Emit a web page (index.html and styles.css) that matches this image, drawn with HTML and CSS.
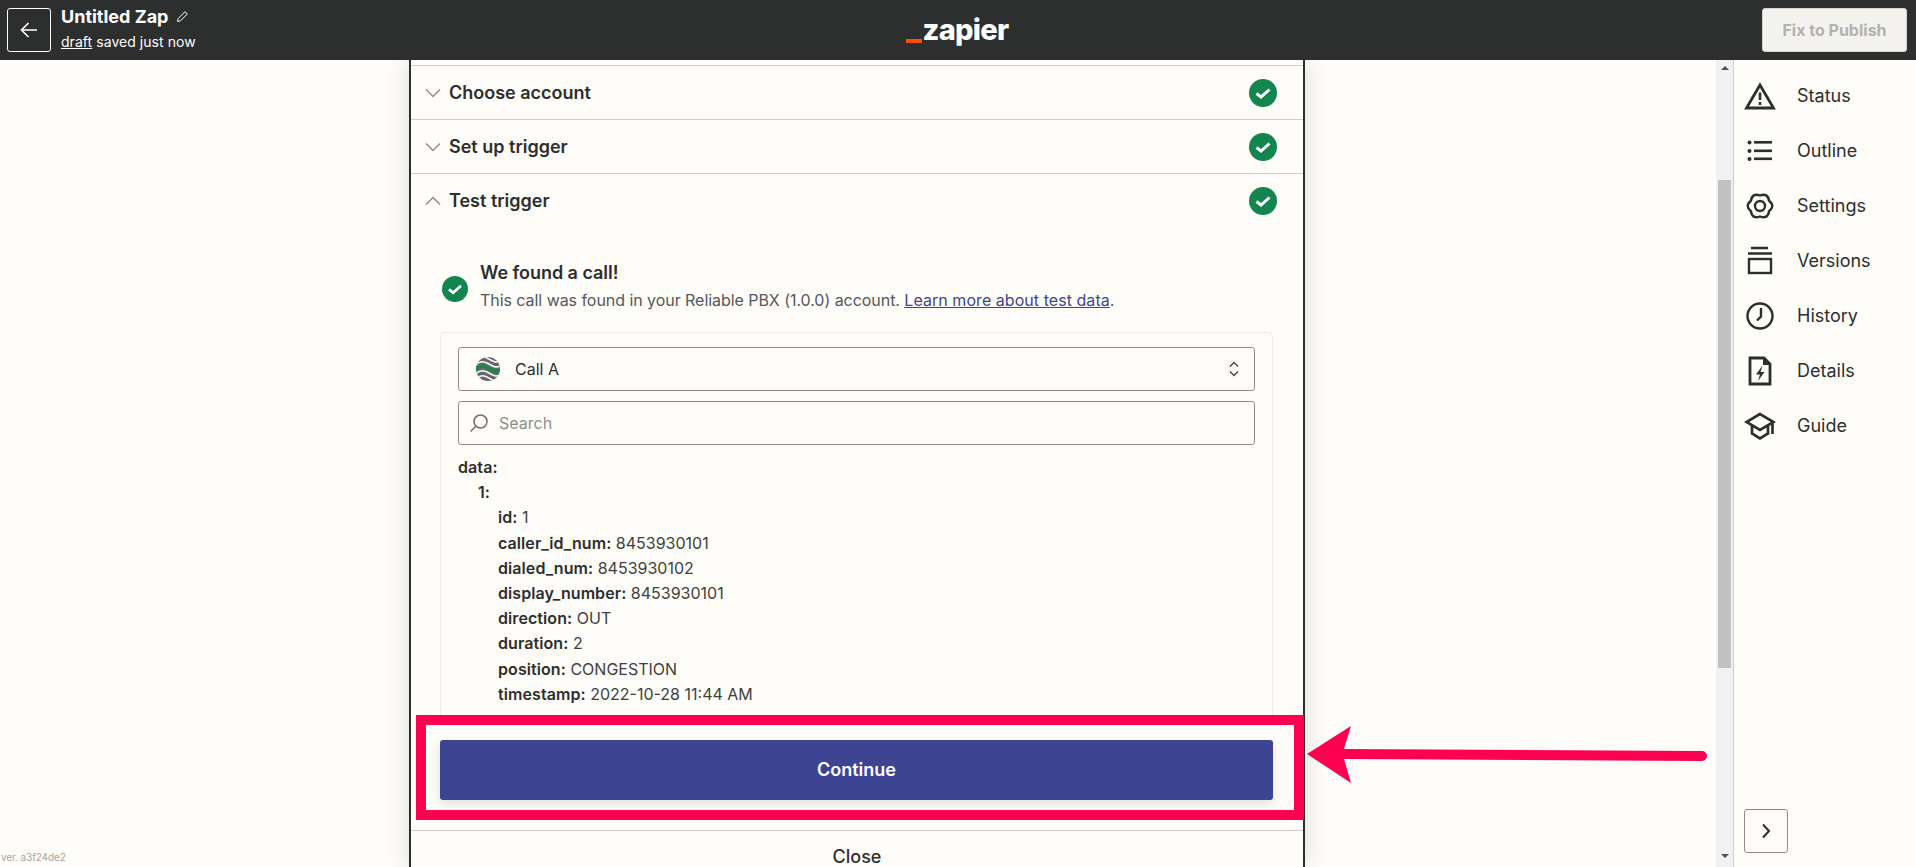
FILE: index.html
```html
<!DOCTYPE html>
<html lang="en">
<head>
<meta charset="UTF-8">
<title>Untitled Zap</title>
<link rel="stylesheet" href="styles.css">
</head>
<body>
	<header class="topbar">
		<div class="topbar-left">
			<button class="back">
				<svg width="20" height="20" viewBox="0 0 20 20" fill="none" stroke="#fff" stroke-width="1.6"><path d="M18 10H2.500M9.500 3l-7 7 7 7"/></svg>
			</button>
			<div class="zap">
				<p class="zap-name">Untitled Zap
					<svg width="13" height="13" viewBox="0 0 13 13" fill="none" stroke="#fff" stroke-width="1"><path d="M1.500 11.500l.7-3L9 1.700l2.300 2.300-6.800 6.800z"/></svg>
				</p>
				<p class="zap-status"><a href="#">draft</a> saved just now</p>
			</div>
		</div>
		<div class="logo"><span class="logo-bar"></span><span class="logo-text">zapier</span></div>
		<div class="topbar-right">
			<button class="publish">Fix to Publish</button>
		</div>
	</header>

	<div class="content">
		<main class="canvas">
			<section class="panel">
				<div class="panel-body">
					<div class="step">
						<svg class="chev" width="16" height="10" viewBox="0 0 16 10" fill="none" stroke="#8f8e8b" stroke-width="1.500"><path d="M1 1.500l7 7 7-7"/></svg>
						<span class="step-name">Choose account</span>
						<svg class="ok" width="28" height="28" viewBox="0 0 28 28"><circle cx="14" cy="14" r="14" fill="#13854e"/><path d="M7.500 14.500l4.500 3.500 8.500-7.500" fill="none" stroke="#fff" stroke-width="3"/></svg>
					</div>
					<div class="step">
						<svg class="chev" width="16" height="10" viewBox="0 0 16 10" fill="none" stroke="#8f8e8b" stroke-width="1.500"><path d="M1 1.500l7 7 7-7"/></svg>
						<span class="step-name">Set up trigger</span>
						<svg class="ok" width="28" height="28" viewBox="0 0 28 28"><circle cx="14" cy="14" r="14" fill="#13854e"/><path d="M7.500 14.500l4.500 3.500 8.500-7.500" fill="none" stroke="#fff" stroke-width="3"/></svg>
					</div>
					<div class="step">
						<svg class="chev" width="16" height="10" viewBox="0 0 16 10" fill="none" stroke="#8f8e8b" stroke-width="1.500"><path d="M1 8.500l7-7 7 7"/></svg>
						<span class="step-name">Test trigger</span>
						<svg class="ok" width="28" height="28" viewBox="0 0 28 28"><circle cx="14" cy="14" r="14" fill="#13854e"/><path d="M7.500 14.500l4.500 3.500 8.500-7.500" fill="none" stroke="#fff" stroke-width="3"/></svg>
					</div>

					<div class="found">
						<svg class="found-icon" width="26" height="26" viewBox="0 0 28 28"><circle cx="14" cy="14" r="14" fill="#13854e"/><path d="M7.500 14.500l4.500 3.500 8.500-7.500" fill="none" stroke="#fff" stroke-width="3"/></svg>
						<div>
							<p class="found-title">We found a call!</p>
							<p class="found-text">This call was found in your Reliable PBX (1.0.0) account. <a href="#">Learn more about test data</a>.</p>
						</div>
					</div>

					<div class="card">
						<div class="field select">
							<svg class="app-logo" width="26" height="26" viewBox="0 0 26 26">
								<defs><clipPath id="globe"><circle cx="13" cy="13" r="12"/></clipPath></defs>
								<g clip-path="url(#globe)" fill="none">
									<rect width="26" height="26" fill="#66686a"/>
									<path d="M-1 6C4-1 9 0 13 2.500S21 8 27 4M-1 11C4 4 9 5 13 7.500S21 13 27 9M-1 20C4 13 9 14 13 16.500S21 22 27 18M-1 25C4 18 9 19 13 21.500S21 27 27 23" stroke="#fff" stroke-width="1.500"/>
									<path d="M-1 15.500C4 8.500 9 9.500 13 12S21 17.500 27 13.500" stroke="#148a45" stroke-width="3.200"/>
								</g>
							</svg>
							<span class="select-value">Call A</span>
							<svg class="updown" width="12" height="20" viewBox="0 0 12 20" fill="none" stroke="#403f3e" stroke-width="1.300"><path d="M2 7.500l4-4 4 4M2 12.500l4 4 4-4"/></svg>
						</div>
						<div class="field search">
							<svg width="20" height="20" viewBox="0 0 20 20" fill="none" stroke="#6f6e6b" stroke-width="1.500"><circle cx="11.500" cy="8.500" r="6.500"/><path d="M6.500 13.500L1.500 18.500"/></svg>
							<span class="search-hint">Search</span>
						</div>
						<div class="data">
							<p><b>data:</b></p>
							<p class="lvl1"><b>1:</b></p>
							<p class="lvl2"><b>id:</b> 1</p>
							<p class="lvl2"><b>caller_id_num:</b> 8453930101</p>
							<p class="lvl2"><b>dialed_num:</b> 8453930102</p>
							<p class="lvl2"><b>display_number:</b> 8453930101</p>
							<p class="lvl2"><b>direction:</b> OUT</p>
							<p class="lvl2"><b>duration:</b> 2</p>
							<p class="lvl2"><b>position:</b> CONGESTION</p>
							<p class="lvl2"><b>timestamp:</b> 2022-10-28 11:44 AM</p>
						</div>
					</div>
				</div>
				<div class="panel-action">
					<button class="continue">Continue</button>
				</div>
				<div class="panel-close">Close</div>
			</section>
			<span class="version">ver. a3f24de2</span>
		</main>

		<div class="scrollbar">
			<span class="arrow-up"></span>
			<span class="thumb"></span>
			<span class="arrow-down"></span>
		</div>

		<aside class="sidebar">
			<ul class="menu">
				<li>
					<svg width="32" height="32" viewBox="0 0 32 32" fill="none" stroke="#2d2e2e" stroke-width="2.800"><path d="M16 5L2.500 28h27z"/><path d="M16 12.500v7.500M16 22v3" stroke-width="2.600"/></svg>
					Status
				</li>
				<li>
					<svg width="32" height="32" viewBox="0 0 32 32" fill="#2d2e2e"><circle cx="5.500" cy="7.500" r="2"/><circle cx="5.500" cy="16" r="2"/><circle cx="5.500" cy="24" r="2"/><rect x="10" y="6" width="18" height="2.600"/><rect x="10" y="14.500" width="18" height="2.600"/><rect x="10" y="22.500" width="18" height="2.600"/></svg>
					Outline
				</li>
				<li>
					<svg width="32" height="32" viewBox="0 0 32 32" fill="none" stroke="#2d2e2e" stroke-width="2.400" stroke-linejoin="round"><path d="M16 5.500Q23.750 2.600 25.100 10.750Q31.500 16 25.100 21.250Q23.750 29.400 16 26.500Q8.250 29.400 6.900 21.250Q.5 16 6.900 10.750Q8.250 2.600 16 5.500z"/><circle cx="16" cy="16" r="5"/></svg>
					Settings
				</li>
				<li>
					<svg width="32" height="32" viewBox="0 0 32 32" fill="none" stroke="#2d2e2e" stroke-width="2.400"><path d="M7 3h17M4 8.500h24"/><rect x="5" y="14" width="22" height="14"/></svg>
					Versions
				</li>
				<li>
					<svg width="32" height="32" viewBox="0 0 32 32" fill="none" stroke="#2d2e2e" stroke-width="2.400"><circle cx="16" cy="16" r="12.500"/><path d="M17 8v8.500l-4 4"/></svg>
					History
				</li>
				<li>
					<svg width="32" height="32" viewBox="0 0 32 32" fill="none" stroke="#2d2e2e" stroke-width="2.800"><path d="M6 3h14l6 6v20H6z"/><path d="M19 2v8h8z" fill="#2d2e2e" stroke="none"/><path d="M18.500 10.500l-6.500 9h4l-2 6.500 6.500-9h-4z" fill="#2d2e2e" stroke="none"/></svg>
					Details
				</li>
				<li>
					<svg width="32" height="32" viewBox="0 0 32 32" fill="none" stroke="#2d2e2e" stroke-width="2.700"><path d="M16 4L2.500 12 16 20l13.500-8zM8 16v7.500l8 5 8-5V16M28.500 12v12"/></svg>
					Guide
				</li>
			</ul>
			<button class="collapse">
				<svg width="12" height="16" viewBox="0 0 12 16" fill="none" stroke="#2d2e2e" stroke-width="2"><path d="M3 1.500L9 8l-6 6.500"/></svg>
			</button>
		</aside>

		<div class="mark-box"></div>
		<svg class="mark-arrow" width="410" height="60" viewBox="0 0 410 60">
			<path d="M1 29L45 1 38 24 396 26a5 5 0 0 1 0 10L38 34 45 58z" fill="#ff0050"/>
		</svg>
	</div>
</body>
</html>
```

FILE: styles.css
```css
*{margin:0;padding:0;box-sizing:border-box;}
html,body{height:100%;overflow:hidden;}
body{
	display:flex;
	flex-direction:column;
	font-family:Inter,"Liberation Sans",sans-serif;
	font-size:16px;
	color:#2d2e2e;
	background:#fffdf9;
}
button{font-family:inherit;cursor:pointer;}
a{color:inherit;}
ul{list-style:none;}

/* top bar */
.topbar{
	flex:none;
	height:60px;
	display:grid;
	grid-template-columns:1fr auto 1fr;
	align-items:center;
	background:#2d2e2e;
	color:#fff;
}
.topbar-left{display:flex;align-items:center;gap:10px;padding-left:7px;}
.back{
	width:44px;
	height:44px;
	display:flex;
	align-items:center;
	justify-content:center;
	background:none;
	border:1px solid #fffdf9;
	border-radius:3px;
}
.zap{margin-top:-4px;}
.zap-name{font-size:18px;font-weight:700;line-height:24px;}
.zap-name svg{margin-left:3px;}
.zap-status{font-size:14px;line-height:20px;margin-top:3px;letter-spacing:.05px;}
.logo{display:flex;align-items:flex-end;gap:0;height:30px;margin-left:-1px;}
.logo-bar{width:16px;height:4px;margin-bottom:2px;background:#ff4f00;}
.logo-text{font-size:29px;font-weight:800;line-height:30px;letter-spacing:-.7px;}
.topbar-right{display:flex;justify-content:flex-end;padding-right:9px;}
.publish{
	width:145px;
	height:44px;
	background:#f4f2ef;
	border:1px solid #d6d4d0;
	border-radius:3px;
	color:#b3b2af;
	font-size:16px;
	font-weight:700;
}

/* page under the bar */
.content{flex:1;min-height:0;display:flex;position:relative;}
.canvas{flex:1;min-width:0;position:relative;overflow:hidden;display:flex;justify-content:center;}
.panel{
	width:896px;
	margin-left:-2px;
	display:flex;
	flex-direction:column;
	border-left:2px solid #2d2e2e;
	border-right:2px solid #2d2e2e;
	background:#fffdf9;
	box-shadow:0 0 22px rgba(45,46,46,.16);
}
.panel-body{flex:1;min-height:0;overflow:hidden;padding-top:5px;}
.step{
	height:54px;
	display:flex;
	align-items:center;
	padding:0 26px 0 14px;
	border-top:1px solid #cfcecb;
}
.step-name{flex:1;margin-left:8px;font-size:18px;font-weight:600;}

.found{display:flex;align-items:center;gap:12px;margin:33px 0 0 31px;}
.found-icon{margin-top:3px;}
.found-title{font-size:18px;font-weight:600;line-height:26px;letter-spacing:-.04px;}
.found-text{color:#52585c;line-height:28px;letter-spacing:-.05px;}
.found-text a{color:#3d4592;letter-spacing:.05px;}

.card{
	margin:18px 30px 0 29px;
	padding:14px 17px;
	border:1px solid #ecebe8;
	border-radius:5px;
}
.field{
	height:44px;
	display:flex;
	align-items:center;
	border:1px solid #8f8e8b;
	border-radius:3px;
}
.select{padding:0 14px 0 16px;}
.select-value{flex:1;margin-left:14px;}
.search{margin-top:10px;padding-left:10px;gap:10px;}
.search-hint{color:#8f8e8b;}
.data{margin-top:10px;line-height:25.200px;}
.data p{color:#403f3e;}
.data b{font-weight:600;color:#2d2e2e;letter-spacing:.08px;}
.lvl1{padding-left:20px;}
.lvl2{padding-left:40px;}

.panel-action{flex:none;padding:25px 30px 30px 29px;background:#fffdf9;}
.continue{
	display:block;
	width:100%;
	height:60px;
	padding-bottom:2px;
	background:#3d4592;
	border:none;
	border-radius:3px;
	color:#fff;
	font-size:18px;
	font-weight:600;
	box-shadow:0 4px 12px rgba(45,46,46,.14);
}
.panel-close{
	flex:none;
	height:37px;
	padding-top:14px;
	border-top:1px solid #cfcecb;
	text-align:center;
	font-size:18px;
	font-weight:500;
	line-height:24px;
}
.version{position:absolute;left:1px;bottom:4px;font-size:10px;color:#a5a4a1;letter-spacing:-.1px;}

/* scrollbar */
.scrollbar{
	flex:none;
	width:18px;
	display:flex;
	flex-direction:column;
	align-items:center;
	padding-top:6px;
	background:#f1f1f3;
	border-right:1px solid #cfcfd2;
}
.arrow-up,.arrow-down{width:0;height:0;border-left:4px solid transparent;border-right:4px solid transparent;}
.arrow-up{border-bottom:4px solid #505050;}
.arrow-down{border-top:4px solid #505050;}
.thumb{width:13px;height:488px;margin:110px 0 186px;background:#c1c1c1;}

/* right side menu */
.sidebar{
	flex:none;
	width:182px;
	display:flex;
	flex-direction:column;
	padding:8px 0 14px 10px;
}
.menu{flex:1;}
.menu li{height:55px;display:flex;align-items:center;gap:21px;font-size:18px;}
.menu svg{flex:none;}
.collapse{
	width:44px;
	height:44px;
	display:flex;
	align-items:center;
	justify-content:center;
	background:none;
	border:1px solid #8f8e8b;
	border-radius:3px;
}

/* annotation drawn over the screenshot */
.mark-box{
	position:absolute;
	left:416px;
	top:655px;
	width:888px;
	height:105px;
	border:10px solid #ff0050;
}
.mark-arrow{position:absolute;left:1306px;top:665px;}
```
